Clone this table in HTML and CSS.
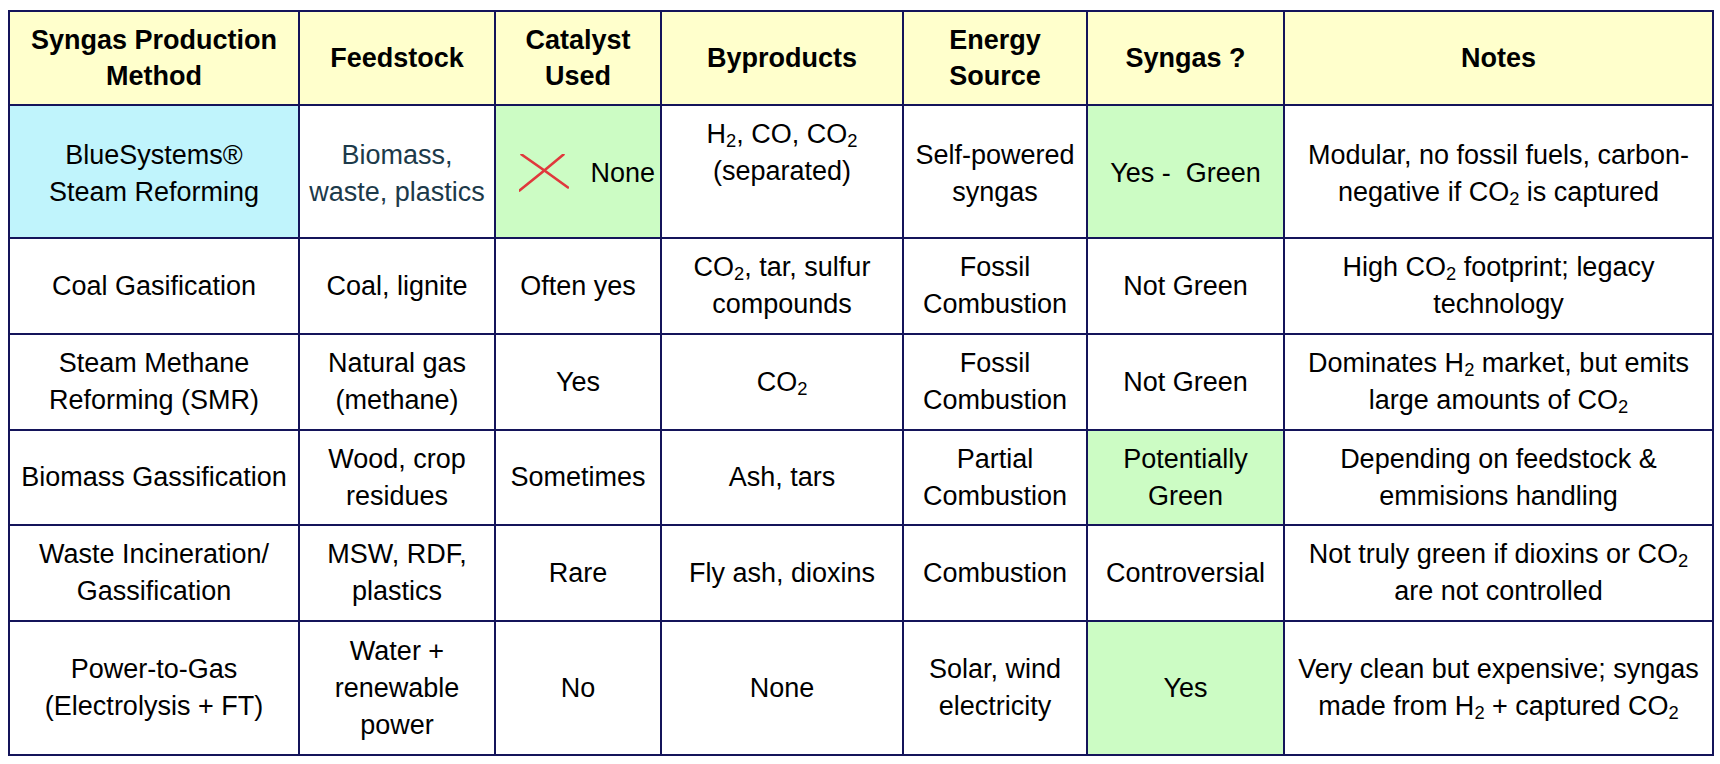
FILE: index.html
```html
<!DOCTYPE html>
<html>
<head>
<meta charset="utf-8">
<link rel="stylesheet" href="styles.css">
</head>
<body>
<table class="grid">
  <colgroup>
    <col class="c1"><col class="c2"><col class="c3"><col class="c4"><col class="c5"><col class="c6"><col class="c7">
  </colgroup>
  <thead>
    <tr class="r-head">
      <th>Syngas Production<br>Method</th>
      <th>Feedstock</th>
      <th>Catalyst<br>Used</th>
      <th>Byproducts</th>
      <th>Energy<br>Source</th>
      <th>Syngas ?</th>
      <th>Notes</th>
    </tr>
  </thead>
  <tbody>
    <tr class="r1">
      <td class="blue">BlueSystems®<br>Steam Reforming</td>
      <td class="slate">Biomass,<br>waste, plastics</td>
      <td class="green">
        <div class="none-cell">
          <svg class="xmark" width="50" height="38" viewBox="0 0 50 38">
            <path d="M0.5 36.5 Q22 19.5 44.5 0.5" fill="none" stroke="#e0383c" stroke-width="2.6" stroke-linecap="round"/>
            <path d="M2.5 0.5 Q25 16 49 33.5" fill="none" stroke="#e0383c" stroke-width="2.6" stroke-linecap="round"/>
          </svg>
          <span>None</span>
        </div>
      </td>
      <td class="lifted">H<sub>2</sub>, CO, CO<sub>2</sub><br>(separated)</td>
      <td>Self-powered<br>syngas</td>
      <td class="green">Yes -&nbsp; Green</td>
      <td>Modular, no fossil fuels, carbon-<br>negative if CO<sub>2</sub> is captured</td>
    </tr>
    <tr class="r2">
      <td>Coal Gasification</td>
      <td>Coal, lignite</td>
      <td>Often yes</td>
      <td>CO<sub>2</sub>, tar, sulfur<br>compounds</td>
      <td>Fossil<br>Combustion</td>
      <td>Not Green</td>
      <td>High CO<sub>2</sub> footprint; legacy<br>technology</td>
    </tr>
    <tr class="r3">
      <td>Steam Methane<br>Reforming (SMR)</td>
      <td>Natural gas<br>(methane)</td>
      <td>Yes</td>
      <td>CO<sub>2</sub></td>
      <td>Fossil<br>Combustion</td>
      <td>Not Green</td>
      <td>Dominates H<sub>2</sub> market, but emits<br>large amounts of CO<sub>2</sub></td>
    </tr>
    <tr class="r4">
      <td>Biomass Gassification</td>
      <td>Wood, crop<br>residues</td>
      <td>Sometimes</td>
      <td>Ash, tars</td>
      <td>Partial<br>Combustion</td>
      <td class="green">Potentially<br>Green</td>
      <td>Depending on feedstock &amp;<br>emmisions handling</td>
    </tr>
    <tr class="r5">
      <td>Waste Incineration/<br>Gassification</td>
      <td>MSW, RDF,<br>plastics</td>
      <td>Rare</td>
      <td>Fly ash, dioxins</td>
      <td>Combustion</td>
      <td>Controversial</td>
      <td>Not truly green if dioxins or CO<sub>2</sub><br>are not controlled</td>
    </tr>
    <tr class="r6">
      <td>Power-to-Gas<br>(Electrolysis + FT)</td>
      <td>Water +<br>renewable<br>power</td>
      <td>No</td>
      <td>None</td>
      <td>Solar, wind<br>electricity</td>
      <td class="green">Yes</td>
      <td>Very clean but expensive; syngas<br>made from H<sub>2</sub> + captured CO<sub>2</sub></td>
    </tr>
  </tbody>
</table>
</body>
</html>
```

FILE: styles.css
```css
html, body {
  margin: 0;
  padding: 0;
  background: #ffffff;
}

body {
  padding: 10px 0 0 8px;
  font-family: "Liberation Sans", Arial, sans-serif;
  color: #000000;
}

.grid {
  border-collapse: collapse;
  table-layout: fixed;
  width: 1704px;
  font-size: 27px;
  line-height: 37px;
}

.c1 { width: 290px; }
.c2 { width: 196px; }
.c3 { width: 166px; }
.c4 { width: 242px; }
.c5 { width: 184px; }
.c6 { width: 197px; }
.c7 { width: 429px; }

.grid th,
.grid td {
  border: 2.5px solid #14145a;
  text-align: center;
  vertical-align: middle;
  padding: 0;
  white-space: nowrap;
}

.grid th {
  background: #ffffcc;
  font-weight: bold;
  line-height: 36px;
}

.r-head { height: 94px; }
.r1 { height: 133px; }
.r2 { height: 96px; }
.r3 { height: 96px; }
.r4 { height: 95px; }
.r5 { height: 96px; }
.r6 { height: 134px; }

.grid .r1 td { padding-top: 4px; }
.grid .r1 td.lifted { padding-top: 0; padding-bottom: 38px; }

.blue { background: #c0f4fc; }
.green { background: #ccfcc4; }
.slate { color: #1c3a4a; }

sub {
  font-size: 0.68em;
  line-height: 0;
  vertical-align: -0.2em;
}

.none-cell {
  display: flex;
  align-items: center;
  justify-content: flex-end;
  gap: 21px;
  padding-right: 5px;
}

.xmark {
  display: block;
  margin-top: -2px;
}
```
